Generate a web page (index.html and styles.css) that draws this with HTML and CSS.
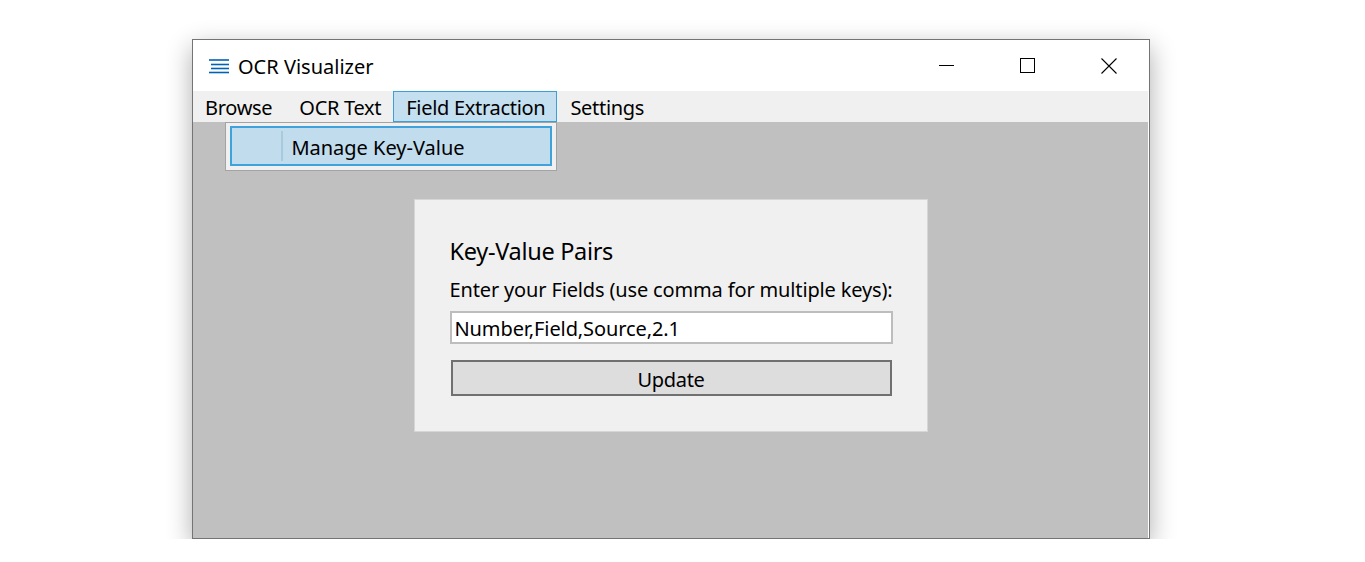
FILE: index.html
```html
<!DOCTYPE html>
<html lang="en">
<head>
<meta charset="utf-8">
<title>OCR Visualizer</title>
<link rel="stylesheet" href="styles.css">
</head>
<body>
<div class="desktop">
  <div class="window">
    <div class="titlebar">
      <div class="title">
        <svg class="app-icon" width="22" height="18" viewBox="0 0 22 18">
          <g stroke="#0063b1" stroke-width="1.6">
            <line x1="1" y1="3" x2="21" y2="3"/>
            <line x1="3" y1="7.5" x2="21" y2="7.5"/>
            <line x1="3" y1="11.5" x2="21" y2="11.5"/>
            <line x1="1" y1="15.5" x2="21" y2="15.5"/>
          </g>
        </svg>
        <span class="title-text">OCR Visualizer</span>
      </div>
      <div class="controls">
        <div class="ctrl">
          <svg width="16" height="16" viewBox="0 0 16 16"><line x1="0" y1="7.5" x2="15" y2="7.5" stroke="#000" stroke-width="1"/></svg>
        </div>
        <div class="ctrl">
          <svg width="16" height="16" viewBox="0 0 16 16"><rect x="0.5" y="0.5" width="14" height="14" fill="none" stroke="#000" stroke-width="1"/></svg>
        </div>
        <div class="ctrl">
          <svg width="16" height="16" viewBox="0 0 16 16"><path d="M0.5 0.5 L15.5 15.5 M15.5 0.5 L0.5 15.5" stroke="#000" stroke-width="1.1"/></svg>
        </div>
      </div>
    </div>
    <div class="frame">
      <nav class="menubar">
        <div class="menu-item">Browse</div>
        <div class="menu-item">OCR Text</div>
        <div class="menu-item active">Field Extraction
          <div class="dropdown">
            <div class="dropdown-item">
              <span class="gutter"></span>
              <span class="dropdown-label">Manage Key-Value</span>
            </div>
          </div>
        </div>
        <div class="menu-item">Settings</div>
      </nav>
      <main class="content">
        <section class="panel">
          <h1 class="panel-title">Key-Value Pairs</h1>
          <label class="panel-label" for="fields">Enter your Fields (use comma for multiple keys):</label>
          <input class="field-input" id="fields" type="text" value="Number,Field,Source,2.1">
          <button class="update-btn" type="button">Update</button>
        </section>
      </main>
    </div>
  </div>
</div>
</body>
</html>
```

FILE: styles.css
```css
* { box-sizing: border-box; }

html, body {
  margin: 0;
  padding: 0;
  background: #ffffff;
  font-family: "Noto Sans", "Open Sans", sans-serif;
  color: #000;
}

.desktop {
  padding: 39px 0 0 192px;
}

.window {
  width: 958px;
  height: 500px;
  border: 1px solid #747474;
  background: #ffffff;
  display: flex;
  flex-direction: column;
  box-shadow: 0 8px 24px rgba(0, 0, 0, 0.32);
}

.titlebar {
  height: 51px;
  display: flex;
  align-items: center;
  justify-content: space-between;
  background: #ffffff;
}

.title {
  display: flex;
  align-items: center;
  padding-left: 15px;
}

.app-icon {
  display: block;
  margin-right: 8px;
}

.title-text {
  font-size: 20px;
  line-height: 27px;
  letter-spacing: 0;
  padding-top: 1px;
  white-space: nowrap;
}

.controls {
  display: flex;
  align-self: stretch;
}

.ctrl {
  width: 81px;
  display: flex;
  align-items: center;
  justify-content: center;
}

.ctrl svg { display: block; }

.frame {
  flex: 1;
  display: flex;
  flex-direction: column;
  margin-right: 1px;
}

.menubar {
  height: 31px;
  background: #f0f0f0;
  display: flex;
  padding-left: 1px;
}

.menu-item {
  position: relative;
  padding: 1px 11px 0 12px;
  font-size: 20px;
  line-height: 29px;
  letter-spacing: -0.3px;
  border: 1px solid transparent;
  border-bottom: 0;
  white-space: nowrap;
}

.menu-item:first-child {
  padding-left: 10px;
  padding-right: 13px;
}

.menu-item.active {
  background: #c4dfef;
  border: 1px solid #3c9fd6;
  padding-right: 11px;
}

.dropdown {
  position: absolute;
  top: 30px;
  right: -1px;
  width: 332px;
  height: 49px;
  background: #f0f0f0;
  border: 1px solid #a3a3a3;
  padding: 3px 4px 4px 4px;
  z-index: 2;
  letter-spacing: 0;
}

.dropdown-item {
  height: 40px;
  display: flex;
  align-items: center;
  background: #c0dced;
  border: 2px solid #3fa2da;
}

.gutter {
  width: 51px;
  align-self: stretch;
  margin: 3px 0;
  border-right: 2px solid #a9c9dc;
}

.dropdown-label {
  padding-left: 8px;
  padding-top: 2px;
  font-size: 20px;
  line-height: 27px;
  letter-spacing: 0;
}

.content {
  flex: 1;
  background: #c0c0c0;
  display: flex;
  justify-content: center;
  align-items: flex-start;
  padding-top: 77px;
}

.panel {
  width: 514px;
  height: 233px;
  background: #f0f0f0;
  border: 1px solid #d6d6d6;
  padding: 35px 35px 0 35px;
  display: flex;
  flex-direction: column;
}

.panel-title {
  margin: 0;
  font-weight: normal;
  font-size: 23.5px;
  line-height: 32px;
  letter-spacing: -0.3px;
}

.panel-label {
  margin-top: 9px;
  font-size: 20px;
  line-height: 27px;
  letter-spacing: -0.15px;
  white-space: nowrap;
}

.field-input {
  margin: 8px 0 0 0;
  width: 443px;
  height: 33px;
  border: 2px solid #bdbdbd;
  background: #ffffff;
  font-family: inherit;
  font-size: 20px;
  line-height: 27px;
  letter-spacing: -0.1px;
  padding: 1px 3px 0 3px;
  color: #000;
  outline: none;
}

.update-btn {
  margin: 16px 0 0 1px;
  width: 441px;
  height: 36px;
  background: #dddddd;
  border: 2px solid #707070;
  font-family: inherit;
  font-size: 20px;
  line-height: 27px;
  letter-spacing: -0.3px;
  padding: 2px 0 0 0;
  color: #000;
}
```
